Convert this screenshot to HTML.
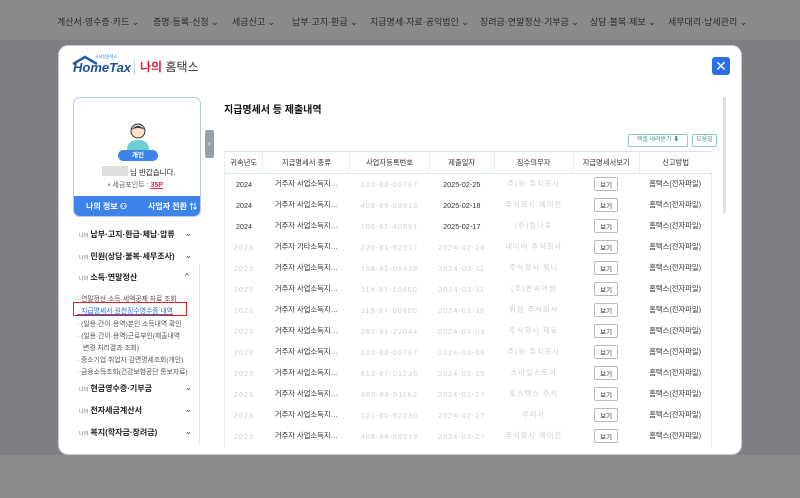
<!DOCTYPE html>
<html><head><meta charset="utf-8"><style>
*{margin:0;padding:0;box-sizing:border-box}
body{width:800px;height:498px;overflow:hidden;background:#7e7f83;font-family:"Liberation Sans","Noto Sans CJK KR",sans-serif;position:relative}
.top{position:absolute;left:0;top:0;width:800px;height:40px;background:#8a8a8a;color:#2a2a2a;font-size:9px}
.top span{position:absolute;top:15px;white-space:nowrap}
.bot{position:absolute;left:0;top:455px;width:800px;height:43px;background:#8b8b8b}
.modal{position:absolute;left:58px;top:45px;width:684px;height:410px;background:#fff;border-radius:10px;border:1px solid #c8c8c8;overflow:hidden}
.abs{position:absolute}
.close{left:653px;top:11px;width:18px;height:18px;background:#2b6ee6;border-radius:3px;color:#fff;font-size:14px;text-align:center;line-height:18px}
.card{left:14px;top:51px;width:128px;height:120px;border:1px solid #b9cbe8;border-radius:7px;overflow:hidden}
.bar{left:0;bottom:0;width:128px;height:20px;background:#3d84ea;color:#fff;font-size:8px;font-weight:bold}
.menu{font-size:8px;font-weight:bold;color:#222;left:20px}
.menu small{font-size:5px;color:#666;font-weight:normal}
.chev{left:126px;font-size:8px;color:#333}
.sub{left:18px;font-size:6.8px;color:#555;white-space:nowrap}
table{position:absolute;left:165px;top:105px;width:488px;border-collapse:collapse;font-size:7.3px;color:#333}
th{height:22px;background:#fff;font-weight:normal;border-top:1px solid #d6e6ea;border-bottom:1px solid #d6e6ea;border-right:1px solid #e6eef0}
th:last-child{border-right:none}
td{height:21px;text-align:center}
tr td:first-child,th:first-child{border-left:1px solid #e6eef0}
tr td:last-child{border-right:1px solid #e6eef0}
.b{display:inline-block;border:1px solid #bbb;border-radius:2px;padding:1px 5px;font-size:6.5px}
.blur{color:#cfcfcf;letter-spacing:1px}
</style></head><body>
<div class="top">
<span style="left:57px">계산서·영수증·카드 ⌄</span>
<span style="left:153px">증명·등록·신청 ⌄</span>
<span style="left:232px">세금신고 ⌄</span>
<span style="left:292px">납부·고지·환급 ⌄</span>
<span style="left:370px">지급명세·자료·공익법인 ⌄</span>
<span style="left:480px">장려금·연말정산·기부금 ⌄</span>
<span style="left:590px">상담·불복·제보 ⌄</span>
<span style="left:668px">세무대리·납세관리 ⌄</span>
</div>
<div class="bot"></div>
<div class="modal">
 <svg class="abs" style="left:12px;top:9px" width="40" height="14"><path d="M2 9 L14 2 L26 9" fill="none" stroke="#2a5ba8" stroke-width="2.5"/></svg>
 <div class="abs" style="left:14px;top:14px;font-size:13px;font-weight:bold;color:#1e4f9e;font-style:italic">HomeTax</div>
 <div class="abs" style="left:36px;top:8px;font-size:4px;color:#2a8fd0">국세청홈택스</div>
 <div class="abs" style="left:75px;top:13px;width:1px;height:16px;background:#ccc"></div>
 <div class="abs" style="left:81px;top:12px;font-size:12px;font-weight:bold"><span style="color:#e1253c">나의</span> <span style="color:#333;font-weight:normal">홈택스</span></div>
 <div class="abs close">✕</div>
 <div class="abs card">
  <svg class="abs" style="left:51px;top:24px" width="26" height="28"><circle cx="13" cy="9" r="7" fill="#fde0c8" stroke="#333"/><path d="M6 8 Q13 0 20 8 Q13 4 6 8Z" fill="#2d3e5a"/><path d="M2 28 Q2 18 13 18 Q24 18 24 28Z" fill="#6ccfd0"/></svg>
  <div class="abs" style="left:44px;top:52px;width:40px;height:11px;border-radius:6px;background:#3d84ea;color:#fff;font-size:6.5px;text-align:center;line-height:11px;font-weight:bold">개인</div>
  <div class="abs" style="left:28px;top:68px;width:26px;height:10px;background:#ddd"></div>
  <div class="abs" style="left:56px;top:69px;font-size:7.5px;color:#222">님 반갑습니다.</div>
  <div class="abs" style="left:34px;top:82px;font-size:7px;color:#666">• 세금포인트 : <b style="color:#e1253c;text-decoration:underline">35P</b></div>
  <div class="abs bar"><span class="abs" style="left:12px;top:5px">나의 정보 ⚇</span><span class="abs" style="left:74px;top:5px">사업자 전환 ⇅</span></div>
 </div>
 <div class="abs" style="left:146px;top:84px;width:9px;height:28px;background:#9aa0a8;border-radius:2px;color:#fff;font-size:8px;line-height:28px;text-align:center">‹</div>
 <div class="abs menu" style="top:183px"><small>나의</small> 납부·고지·환급·체납·압류</div><div class="abs chev" style="top:183px">⌄</div>
 <div class="abs menu" style="top:205px"><small>나의</small> 민원(상담·불복·세무조사)</div><div class="abs chev" style="top:205px">⌄</div>
 <div class="abs menu" style="top:226px"><small>나의</small> 소득·연말정산</div><div class="abs chev" style="top:226px">^</div>
 <div class="abs sub" style="top:247px">· 연말정산 소득·세액공제 자료 조회</div>
 <div class="abs sub" style="top:259px;color:#2b6ee6;text-decoration:underline">· 지급명세서·원천징수영수증 내역</div>
 <div class="abs" style="left:14px;top:256px;width:114px;height:14px;border:1.5px solid #e02020"></div>
 <div class="abs sub" style="top:272px">· (일용·간이·용역)본인 소득내역 확인</div>
 <div class="abs sub" style="top:284px">· (일용·간이·용역)근로부인(제출내역</div>
 <div class="abs sub" style="top:296px;left:24px">변경 처리결과 조회)</div>
 <div class="abs sub" style="top:308px">· 중소기업 취업자 감면명세조회(개인)</div>
 <div class="abs sub" style="top:320px">· 금융소득조회(건강보험공단 통보자료)</div>
 <div class="abs menu" style="top:337px"><small>나의</small> 현금영수증·기부금</div><div class="abs chev" style="top:337px">⌄</div>
 <div class="abs menu" style="top:359px"><small>나의</small> 전자세금계산서</div><div class="abs chev" style="top:359px">⌄</div>
 <div class="abs menu" style="top:381px"><small>나의</small> 복지(학자금·장려금)</div><div class="abs chev" style="top:381px">⌄</div>
 <div class="abs" style="left:140px;top:218px;width:1px;height:180px;background:#e4e4e4"></div>
 <div class="abs" style="left:165px;top:55px;font-size:10px;font-weight:bold;color:#111">지급명세서 등 제출내역</div>
 <div class="abs" style="left:569px;top:88px;width:60px;height:13px;border:1px solid #8fcfc8;border-radius:2px;font-size:6px;color:#3a9a90;text-align:center;line-height:11px">엑셀 내려받기 ⬇</div>
 <div class="abs" style="left:633px;top:88px;width:25px;height:13px;border:1px solid #8fcfc8;border-radius:2px;font-size:6px;color:#3a9a90;text-align:center;line-height:11px">도움말</div>
 <div class="abs" style="left:664px;top:51px;width:3px;height:116px;background:#e0e0e0"></div>
 <table>
 <tr><th>귀속년도</th><th>지급명세서 종류</th><th>사업자등록번호</th><th>제출일자</th><th>징수의무자</th><th>지급명세서보기</th><th>신고방법</th></tr>
 <tr><td>2024</td><td>거주자 사업소득지…</td><td class="blur">120-88-00767</td><td>2025-02-25</td><td class="blur">주)등 주식회사</td><td><span class="b">보기</span></td><td>홈택스(전자파일)</td></tr>
 <tr><td>2024</td><td>거주자 사업소득지…</td><td class="blur">408-86-09913</td><td>2025-02-18</td><td class="blur">주식회사 에이전</td><td><span class="b">보기</span></td><td>홈택스(전자파일)</td></tr>
 <tr><td>2024</td><td>거주자 사업소득지…</td><td class="blur">106-81-40991</td><td>2025-02-17</td><td class="blur">(주)링나투</td><td><span class="b">보기</span></td><td>홈택스(전자파일)</td></tr>
 <tr><td class="blur">2023</td><td>거주자 기타소득지…</td><td class="blur">220-81-62517</td><td class="blur">2024-02-28</td><td class="blur">네이버 주식회사</td><td><span class="b">보기</span></td><td>홈택스(전자파일)</td></tr>
 <tr><td class="blur">2023</td><td>거주자 사업소득지…</td><td class="blur">158-81-01438</td><td class="blur">2024-03-11</td><td class="blur">주식회사 워니</td><td><span class="b">보기</span></td><td>홈택스(전자파일)</td></tr>
 <tr><td class="blur">2023</td><td>거주자 사업소득지…</td><td class="blur">114-87-10860</td><td class="blur">2024-03-11</td><td class="blur">(주)엔씨어셈</td><td><span class="b">보기</span></td><td>홈택스(전자파일)</td></tr>
 <tr><td class="blur">2023</td><td>거주자 사업소득지…</td><td class="blur">119-87-00800</td><td class="blur">2024-03-10</td><td class="blur">위험 주식회사</td><td><span class="b">보기</span></td><td>홈택스(전자파일)</td></tr>
 <tr><td class="blur">2023</td><td>거주자 사업소득지…</td><td class="blur">261-81-22044</td><td class="blur">2024-03-09</td><td class="blur">주식회사 제로</td><td><span class="b">보기</span></td><td>홈택스(전자파일)</td></tr>
 <tr><td class="blur">2023</td><td>거주자 사업소득지…</td><td class="blur">120-88-00767</td><td class="blur">2024-03-06</td><td class="blur">주)등 주식회사</td><td><span class="b">보기</span></td><td>홈택스(전자파일)</td></tr>
 <tr><td class="blur">2023</td><td>거주자 사업소득지…</td><td class="blur">813-87-01236</td><td class="blur">2024-02-29</td><td class="blur">스마일스토어</td><td><span class="b">보기</span></td><td>홈택스(전자파일)</td></tr>
 <tr><td class="blur">2023</td><td>거주자 사업소득지…</td><td class="blur">669-88-01162</td><td class="blur">2024-02-27</td><td class="blur">포스텍스 주식</td><td><span class="b">보기</span></td><td>홈택스(전자파일)</td></tr>
 <tr><td class="blur">2023</td><td>거주자 사업소득지…</td><td class="blur">121-60-62230</td><td class="blur">2024-02-27</td><td class="blur">우리가</td><td><span class="b">보기</span></td><td>홈택스(전자파일)</td></tr>
 <tr><td class="blur">2023</td><td>거주자 사업소득지…</td><td class="blur">408-86-09913</td><td class="blur">2024-02-27</td><td class="blur">주식회사 에이전</td><td><span class="b">보기</span></td><td>홈택스(전자파일)</td></tr>
 </table>
</div>
</body></html>
